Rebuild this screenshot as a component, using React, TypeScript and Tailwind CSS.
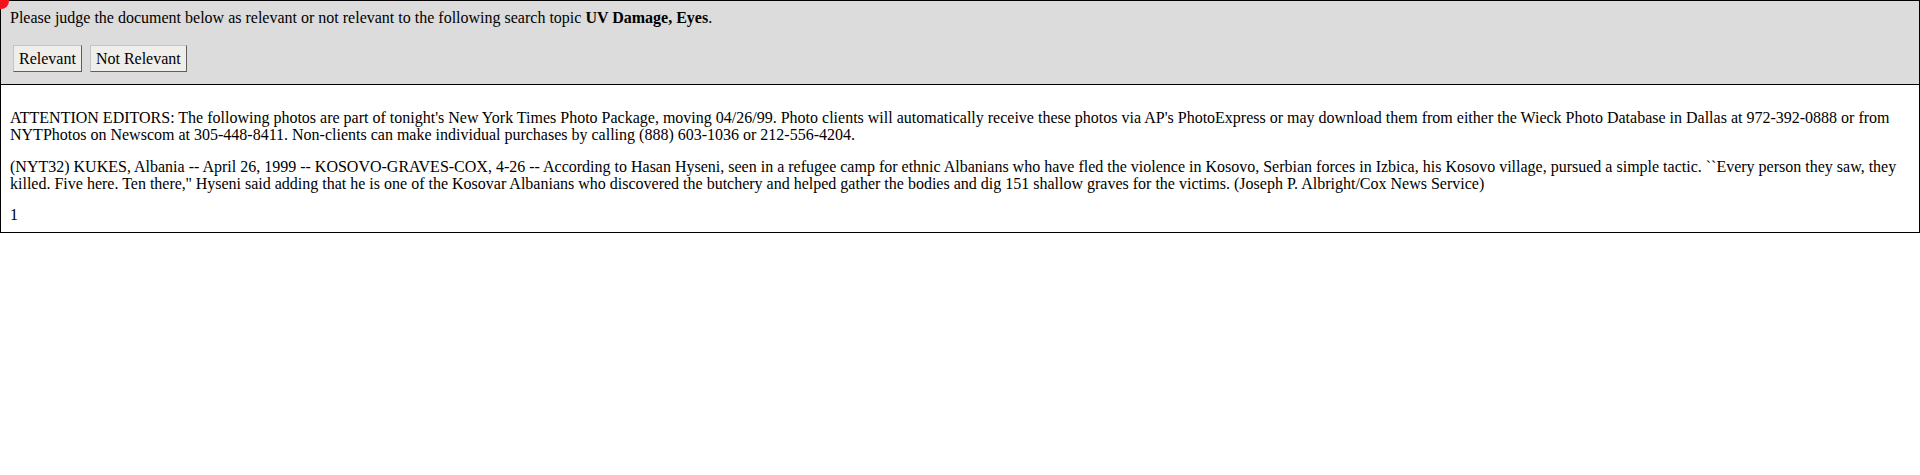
import React from "react";

function Btn({ children }: { children: React.ReactNode }) {
  return (
    <button
      type="button"
      className="h-[27px] px-[5px] bg-[#f0eeea] border border-t-[#c4c4c4] border-l-[#c4c4c4] border-r-[#5e5e5e] border-b-[#5e5e5e] text-[16px] leading-[17px] text-black"
      style={{ fontFamily: '"Liberation Serif", "Times New Roman", serif' }}
    >
      {children}
    </button>
  );
}

export default function App() {
  return (
    <div
      className="relative w-[1920px] text-[16px] leading-[17px] text-black bg-white"
      style={{ fontFamily: '"Liberation Serif", "Times New Roman", serif' }}
    >
      <div className="absolute -left-[7px] -top-[7px] w-[16px] h-[16px] rounded-full bg-[#f2141a] z-10" />
      <div className="bg-[#dcdcdc] border border-black px-[9px] pt-2 pb-[12px]">
        <p>
          Please judge the document below as relevant or not relevant to the following search topic{" "}
          <b>UV Damage, Eyes</b>.
        </p>
        <div className="mt-[19px] flex gap-[8px] pl-[3px]">
          <Btn>Relevant</Btn>
          <Btn>Not Relevant</Btn>
        </div>
      </div>
      <div className="border border-t-0 border-black px-[9px] pt-[9px] pb-[9px]">
        <p className="mt-[15px]">
          ATTENTION EDITORS: The following photos are part of tonight's New York Times Photo Package, moving 04/26/99. Photo clients will automatically receive these photos via AP's PhotoExpress or may download them from either the Wieck Photo Database in Dallas at 972-392-0888 or from NYTPhotos on Newscom at 305-448-8411. Non-clients can make individual purchases by calling (888) 603-1036 or 212-556-4204.
        </p>
        <p className="mt-[15px]">
          (NYT32) KUKES, Albania -- April 26, 1999 -- KOSOVO-GRAVES-COX, 4-26 -- According to Hasan Hyseni, seen in a refugee camp for ethnic Albanians who have fled the violence in Kosovo, Serbian forces in Izbica, his Kosovo village, pursued a simple tactic. ``Every person they saw, they killed. Five here. Ten there,'' Hyseni said adding that he is one of the Kosovar Albanians who discovered the butchery and helped gather the bodies and dig 151 shallow graves for the victims. (Joseph P. Albright/Cox News Service)
        </p>
        <p className="mt-[14px]">1</p>
      </div>
    </div>
  );
}
